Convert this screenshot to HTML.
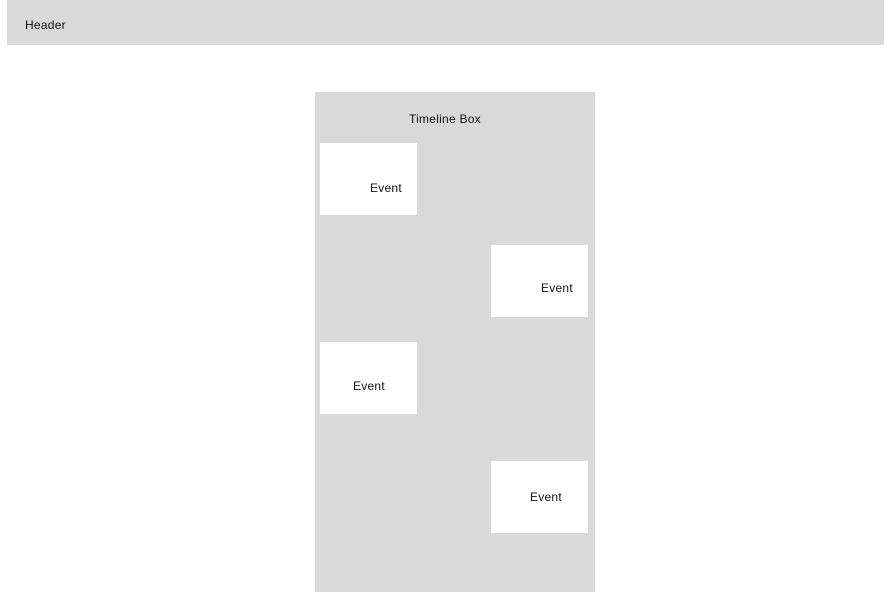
<!DOCTYPE html>
<html><head><style>
body{margin:0;width:892px;height:606px;background:#fff;position:relative;font-family:"Liberation Sans",sans-serif;font-size:12px;letter-spacing:0.25px;color:#111;overflow:hidden}
div{position:absolute}
.b{background:#fff;width:97px;height:72px}
.t{position:absolute;white-space:nowrap}
</style></head><body>
<div style="left:7px;top:0;width:877px;height:45px;background:#d9d9d9"><span class="t" style="left:18px;top:18px">Header</span></div>
<div style="left:315px;top:92px;width:280px;height:500px;background:#d9d9d9">
<span class="t" style="left:94px;top:20px">Timeline Box</span>
<div class="b" style="left:5px;top:51px"><span class="t" style="left:50px;top:38px">Event</span></div>
<div class="b" style="left:176px;top:153px"><span class="t" style="left:50px;top:36px">Event</span></div>
<div class="b" style="left:5px;top:250px"><span class="t" style="left:33px;top:37px">Event</span></div>
<div class="b" style="left:176px;top:369px"><span class="t" style="left:39px;top:29px">Event</span></div>
</div>
</body></html>
